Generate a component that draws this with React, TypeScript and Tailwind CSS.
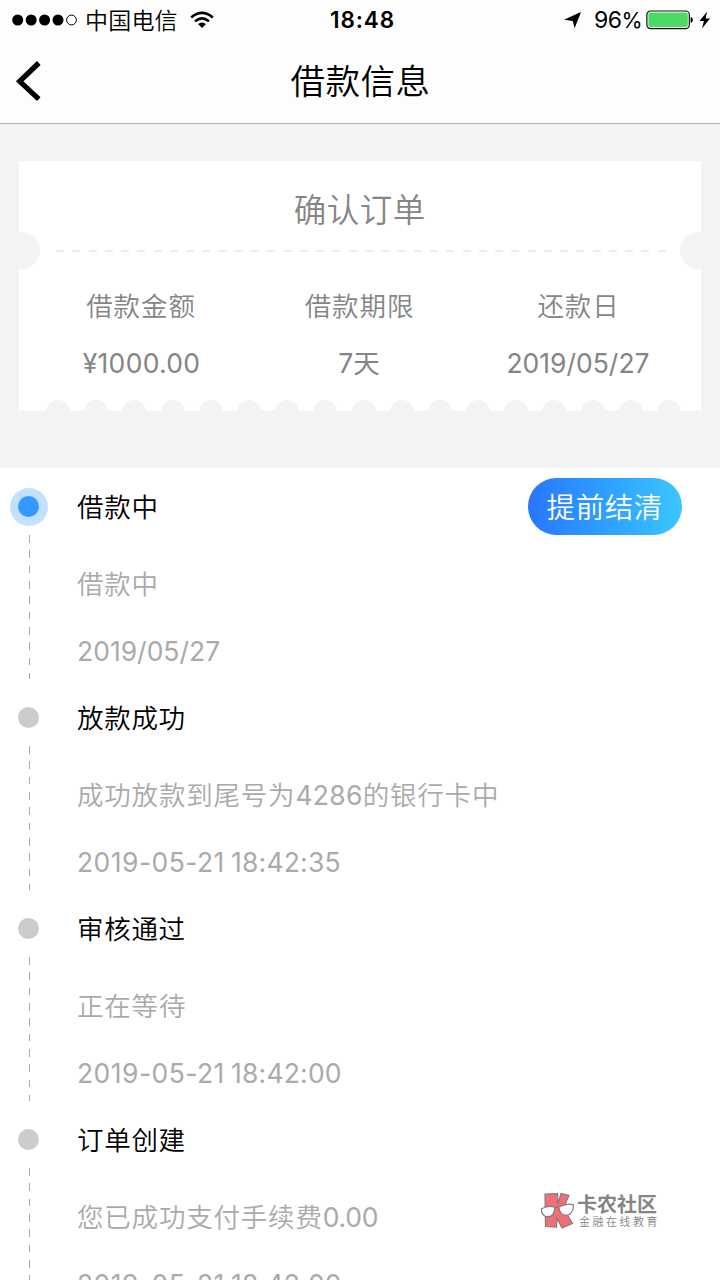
import type { ReactNode } from "react";

type Step = { title: string; detail: ReactNode; date: string; clock?: string; active?: boolean };

const steps: Step[] = [
  { title: "借款中", detail: "借款中", date: "2019/05/27", active: true },
  {
    title: "放款成功",
    detail: (
      <>
        成功放款到尾号为<span className="font-normal tracking-[0.3px]">4286</span>的银行卡中
      </>
    ),
    date: "2019-05-21",
    clock: "18:42:35",
  },
  { title: "审核通过", detail: "正在等待", date: "2019-05-21", clock: "18:42:00" },
  {
    title: "订单创建",
    detail: (
      <>
        您已成功支付手续费<span className="font-normal tracking-[-0.2px]">0.00</span>
      </>
    ),
    date: "2019-05-21",
    clock: "18:42:00",
  },
];

const summary = [
  { label: "借款金额", value: "¥1000.00", width: "w-[243px]", tracking: "tracking-[0.3px] pl-[2px]" },
  { label: "借款期限", value: "7天", width: "w-[194px]", tracking: "" },
  { label: "还款日", value: "2019/05/27", width: "w-[244px]", tracking: "" },
];

function StatusBar() {
  return (
    <div className="flex h-10 items-center text-black">
      <svg className="ml-3 h-3 w-[66px] shrink-0" viewBox="0 0 66 12">
        {[5.7, 19.2, 32.6, 46].map((x) => (
          <circle key={x} cx={x} cy="6" r="5.5" />
        ))}
        <circle cx="59.5" cy="6" r="4.9" fill="none" stroke="#000" strokeWidth="1" />
      </svg>
      <span className="ml-[7px] w-[94px] whitespace-nowrap pt-[1px] text-[23px] font-[350] leading-10 tracking-[0.2px]">
        中国电信
      </span>
      <svg className="ml-[11px] h-[19px] w-6 shrink-0" viewBox="0 0 24 19" fill="none" stroke="#000">
        <path d="M1.2 6.4Q12-2.5 22.8 6.4" strokeWidth="2.6" />
        <path d="M5 10.4Q12 4.4 19 10.4" strokeWidth="2.5" />
        <path d="M8 13.1Q12 9.9 16 13.1L12 17Z" fill="#000" stroke="none" />
      </svg>
      <span className="ml-[116px] w-[66px] whitespace-nowrap text-[22.5px] font-semibold tracking-[0.9px]">
        18:48
      </span>
      <svg className="ml-[167px] h-[18px] w-[19px] shrink-0" viewBox="0 0 19 18">
        <path d="M18 1L11.6 17.3 9.8 9.9 .9 8.8Z" />
      </svg>
      <span className="ml-[12px] flex w-[48px] items-baseline whitespace-nowrap text-[23px] tracking-[-0.5px]">
        96<span className="text-[21.5px]">%</span>
      </span>
      <svg className="ml-[4px] h-5 w-[48px] shrink-0" viewBox="0 0 48 20">
        <rect x=".9" y="1" width="42.4" height="17.6" rx="3.6" fill="#fff" stroke="#111" strokeWidth="1.2" />
        <rect x="2.4" y="2.5" width="39.4" height="14.6" rx="2" fill="#4cd964" />
        <path d="M44.6 7c3 .3 3 5.5 0 5.8Z" />
      </svg>
      <svg className="ml-[5px] h-[18px] w-3 shrink-0" viewBox="0 0 12 18">
        <path d="M8.1.5L.5 10.1H4.9L3 17.4 11 7.4H6.6Z" />
      </svg>
    </div>
  );
}

function Ticket() {
  return (
    <div className="flex h-[249.5px] flex-col bg-white text-[#858585]">
      <h2 className="h-[71px] pt-[26px] text-center text-[32.5px] font-[350] leading-[48px] tracking-[0.5px]">确认订单</h2>
      <div className="flex h-[37px] items-center justify-between">
        <div className="h-[37px] w-[20.5px] rounded-r-full bg-[#f2f3f5]" />
        <div className="ml-[3px] h-[2px] w-[611px] bg-[repeating-linear-gradient(to_right,#ececec_0_8px,transparent_8px_16.26px)]" />
        <div className="h-[37px] w-[20.5px] rounded-l-full bg-[#f2f3f5]" />
      </div>
      <div className="flex h-[130.5px] pt-[16px]">
        {summary.map((s) => (
          <div key={s.label} className={`${s.width} text-center text-[26.5px]`}>
            <div className="h-[42px] pl-[1px] font-[350] leading-[42px] tracking-[0.9px]">{s.label}</div>
            <div className={`mt-[15px] h-[42px] leading-[42px] ${s.tracking}`}>{s.value}</div>
          </div>
        ))}
      </div>
      <div className="flex h-[11px] justify-between overflow-hidden pl-[27px] pr-[19.5px]">
        {Array.from({ length: 17 }, (_, i) => (
          <div key={i} className="size-6 shrink-0 rounded-full bg-[#f2f3f5]" />
        ))}
      </div>
    </div>
  );
}

function TimelineItem({ step }: { step: Step }) {
  return (
    <li className="flex h-[211px] shrink-0">
      <div className="flex w-[58px] shrink-0 flex-col items-center">
        <div className="flex h-[67px] shrink-0 items-start pr-[1px] pt-[19.5px]">
          <div
            className={`flex size-[38px] items-center justify-center rounded-full ${step.active ? "bg-[#c2e0ff]" : ""}`}
          >
            <div className={`size-[21px] rounded-full ${step.active ? "bg-[#3399ff]" : "bg-[#cccccc]"}`} />
          </div>
        </div>
        <div className="ml-[1px] h-[144px] w-px bg-[repeating-linear-gradient(to_bottom,#aaaaaa_0_7.7px,transparent_7.7px_15.35px)]" />
      </div>
      <div className="flex grow flex-col whitespace-nowrap pl-[19px] text-[26.5px] text-[#aaaaaa]">
        <div className="flex h-[78px] items-center justify-between pr-[38.5px] text-black">
          <h3 className="pt-[2px] font-[350] tracking-[0.7px]">{step.title}</h3>
          {step.active && (
            <button className="mb-[1px] h-[57px] w-[153.5px] rounded-full bg-linear-to-r from-[#2b75ff] to-[#3cc6ff] pt-[3px] text-[28.5px] font-[350] tracking-[0.6px] text-white">
              提前结清
            </button>
          )}
        </div>
        <div className="h-[76px] font-[350] leading-[76px] tracking-[0.8px]">{step.detail}</div>
        <div className="flex h-[57px] leading-[58px]">
          <span className={step.clock ? "w-[154px] tracking-[0.45px]" : ""}>{step.date}</span>
          {step.clock && <span className="tracking-[0.2px]">{step.clock}</span>}
        </div>
      </div>
    </li>
  );
}

function Watermark() {
  return (
    <div className="absolute left-[540px] top-[1191px] flex h-[40px] w-[120px] text-[#858585]">
      <svg className="h-[40px] w-[35px] shrink-0" viewBox="0 0 35 40" stroke="#87797b" strokeWidth="1.2">
        <path d="M5 3L17.6 2.5 17.8 13 21 2.5 29 4.5 23.5 17 32.5 32.5 22 37 17 27.5 16.5 36 5.5 35.5Z" fill="#ef7078" />
        <path d="M1.2 18Q8 14 14.8 16.2Q14.4 25.4 8 25.8Q1.8 26 1.2 18Z" fill="#fff" />
        <path d="M18.8 16Q26.5 12 33.4 13.6Q33.7 23.2 26.5 24.4Q19.6 24 18.8 16Z" fill="#fff" />
        <path d="M14.8 17.4Q17 15.2 18.8 16.5" fill="none" />
      </svg>
      <div className="ml-[2px] flex flex-col whitespace-nowrap">
        <div className="mt-[2px] h-[23px] text-[20px] font-bold leading-[25px]">卡农社区</div>
        <div className="h-[13px] pl-[2px] text-[11px] font-[350] leading-[12px] tracking-[2.5px]">金融在线教育</div>
      </div>
    </div>
  );
}

export default function App() {
  return (
    <div className="relative flex h-[1280px] w-[720px] flex-col overflow-hidden bg-white font-['Inter','Noto_Sans_CJK_SC',sans-serif]">
      <header className="h-[124px] shrink-0 border-b border-[#adafb1] bg-[#fdfdfd]">
        <StatusBar />
        <div className="flex h-[83px] items-center">
          <svg className="mb-[2px] ml-[15px] h-[42px] w-[27px]" viewBox="0 0 27 42" fill="none" stroke="#000" strokeWidth="5.2">
            <path d="M23.8 3L4.7 21.3 23.8 39.2" />
          </svg>
          <h1 className="grow pr-[41px] text-center text-[34.5px] font-[350] tracking-[0.5px] text-black">借款信息</h1>
        </div>
      </header>
      <main className="flex min-h-0 grow flex-col">
        <section className="h-[344px] shrink-0 bg-[#f2f3f5] pl-[19px] pr-[19.5px] pt-[37px]">
          <Ticket />
        </section>
        <ol className="flex min-h-0 grow flex-col overflow-hidden">
          {steps.map((s) => (
            <TimelineItem key={s.title} step={s} />
          ))}
        </ol>
      </main>
      <Watermark />
    </div>
  );
}
